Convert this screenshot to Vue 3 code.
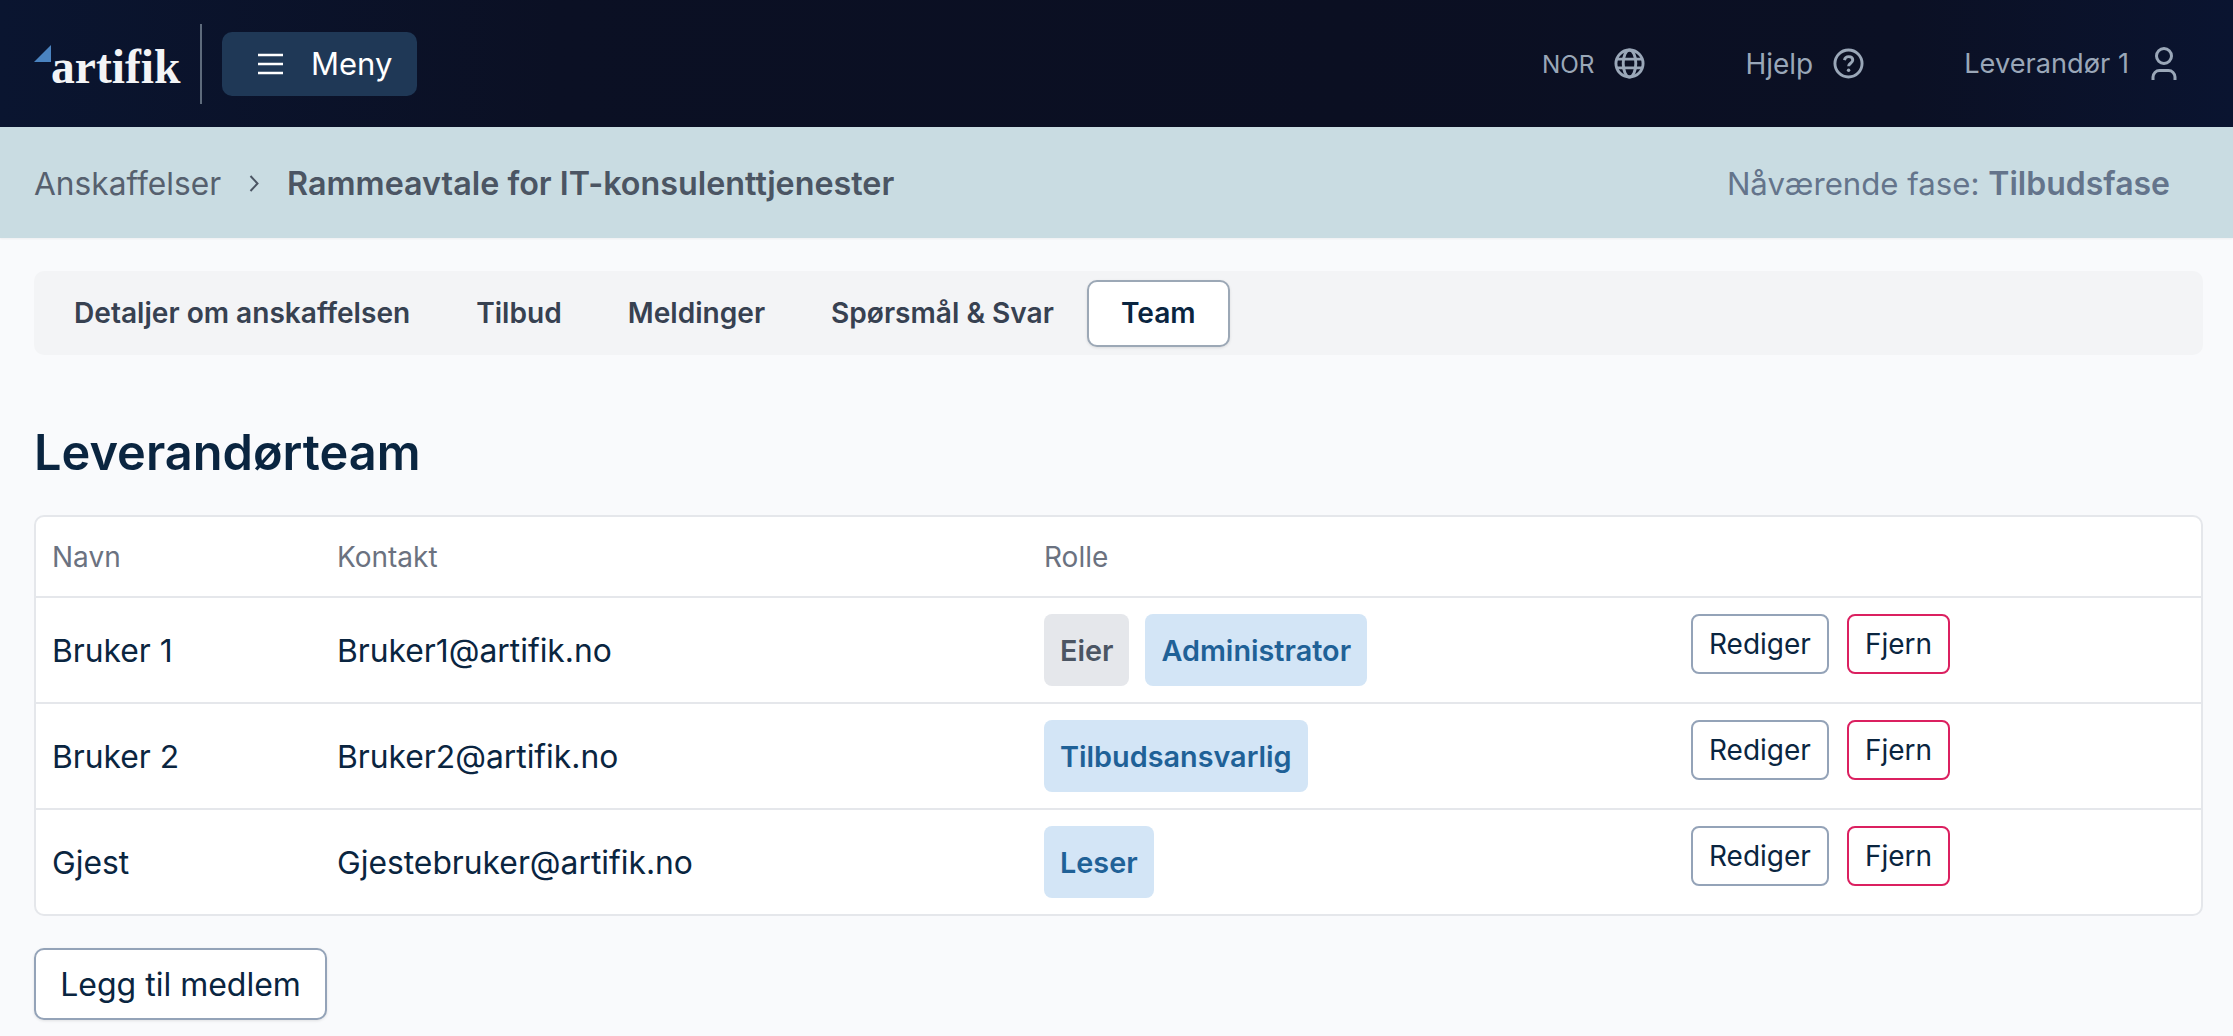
<script setup>
const members = [
  { name: "Bruker 1", email: "Bruker1@artifik.no", roles: [{ label: "Eier", kind: "grey" }, { label: "Administrator", kind: "blue" }] },
  { name: "Bruker 2", email: "Bruker2@artifik.no", roles: [{ label: "Tilbudsansvarlig", kind: "blue" }] },
  { name: "Gjest", email: "Gjestebruker@artifik.no", roles: [{ label: "Leser", kind: "blue" }] },
];

const tabs = ["Detaljer om anskaffelsen", "Tilbud", "Meldinger", "Spørsmål & Svar", "Team"];
</script>

<template>
  <div class="page">
    <header class="topbar">
      <div class="topbar-left">
        <div class="logo">
          <svg class="logo-mark" viewBox="0 0 17 17" aria-hidden="true">
            <polygon points="17,0 17,17 0,17" fill="#4a83c0" />
          </svg>
          <span class="logo-text">artifik</span>
        </div>
        <span class="divider"></span>
        <button class="menu-btn">
          <svg class="menu-icon" viewBox="0 0 25 22" aria-hidden="true">
            <path d="M0 2h25M0 11h25M0 20h25" stroke="#fff" stroke-width="2.4" fill="none" />
          </svg>
          <span>Meny</span>
        </button>
      </div>

      <div class="topbar-right">
        <div class="top-item lang">
          <span>NOR</span>
          <svg class="top-icon" viewBox="0 0 32 32" aria-hidden="true">
            <circle cx="16" cy="16" r="14" />
            <ellipse cx="16" cy="16" rx="6.5" ry="14" />
            <path d="M2.5 11.5h27M2.5 20.500h27" />
          </svg>
        </div>
        <div class="top-item help">
          <span>Hjelp</span>
          <svg class="top-icon" viewBox="0 0 32 32" aria-hidden="true">
            <circle cx="16" cy="16" r="14" />
            <path d="M11.800 12.500c.5-2.400 2.200-3.600 4.400-3.600 2.500 0 4.200 1.500 4.200 3.600 0 3.200-4.300 3.300-4.300 6.300" />
            <circle class="dot" cx="16.100" cy="23" r="1.800" />
          </svg>
        </div>
        <div class="top-item user">
          <span>Leverandør 1</span>
          <svg class="user-icon" viewBox="0 0 26 34" aria-hidden="true">
            <circle cx="13" cy="9" r="7.500" />
            <path d="M2 33v-3c0-3.500 3-6.500 6.500-6.500h9c3.500 0 6.500 3 6.500 6.500v3" />
          </svg>
        </div>
      </div>
    </header>

    <div class="subbar">
      <div class="crumbs">
        <span>Anskaffelser</span>
        <svg class="chevron" viewBox="0 0 10 17" aria-hidden="true">
          <path d="M1.500 1l7 7.500-7 7.500" fill="none" stroke="#4b5563" stroke-width="2" />
        </svg>
        <strong>Rammeavtale for IT-konsulenttjenester</strong>
      </div>
      <div class="phase">Nåværende fase: <strong>Tilbudsfase</strong></div>
    </div>

    <main class="content">
      <nav class="tabs">
        <a v-for="tab in tabs" :key="tab" class="tab" :class="{ active: tab === 'Team' }">{{ tab }}</a>
      </nav>

      <h1 class="title">Leverandørteam</h1>

      <div class="team-table">
        <div class="row head">
          <div>Navn</div>
          <div>Kontakt</div>
          <div>Rolle</div>
          <div></div>
        </div>
        <div v-for="m in members" :key="m.email" class="row">
          <div>{{ m.name }}</div>
          <div>{{ m.email }}</div>
          <div class="roles">
            <span v-for="r in m.roles" :key="r.label" class="badge" :class="r.kind">{{ r.label }}</span>
          </div>
          <div class="actions">
            <button class="btn">Rediger</button>
            <button class="btn danger">Fjern</button>
          </div>
        </div>
      </div>

      <button class="add-btn">Legg til medlem</button>
    </main>
  </div>
</template>

<style>
body {
  margin: 0;
  background: #f9fafc;
}
</style>

<style scoped>
.page {
  font-family: Inter, "Liberation Sans", sans-serif;
  color: #0a2540;
  height: 1036px;
  overflow: hidden;
}

/* === TOP BAR === */
.topbar {
  height: 127px;
  display: flex;
  align-items: center;
  justify-content: space-between;
  padding: 0 56px 0 34px;
  background: linear-gradient(90deg, #0a1530 0%, #0b1024 25%, #0b0f22 60%, #0b1024 85%, #0a1430 100%);
}

.topbar-left {
  display: flex;
  align-items: center;
}

.logo {
  display: flex;
  align-items: flex-start;
  height: 42px;
  width: 145px;
  margin-top: -4px;
}

.logo-mark {
  width: 17px;
  height: 17px;
  flex: none;
  margin-top: 4px;
}

.logo-text {
  font-family: "Liberation Serif", serif;
  font-weight: 700;
  font-size: 47.6px;
  line-height: 42px;
  color: #f3f4f6;
  margin-top: 5px;
}

.divider {
  width: 2px;
  height: 80px;
  background: #5e6b7c;
  margin: 0 20px 0 21px;
}

.menu-btn {
  display: flex;
  align-items: center;
  gap: 28px;
  height: 64px;
  width: 195px;
  padding: 0 0 0 36px;
  background: #1f3856;
  border: none;
  border-radius: 10px;
  color: #fff;
  font: inherit;
  font-size: 31px;
}

.menu-icon {
  width: 25px;
  height: 22px;
}

.topbar-right {
  display: flex;
  align-items: center;
  color: #9aa7b8;
  font-size: 27.2px;
}

.top-item {
  display: flex;
  align-items: center;
  gap: 20px;
}

.lang {
  font-size: 24.3px;
}

.help {
  margin-left: 100px;
  font-size: 28px;
}

.user {
  margin-left: 100px;
  gap: 22px;
}

.top-icon {
  width: 31px;
  height: 31px;
  fill: none;
  stroke: #9aa7b8;
  stroke-width: 3;
}

.top-icon .dot {
  fill: #9aa7b8;
  stroke: none;
}

.user-icon {
  width: 26px;
  height: 34px;
  fill: none;
  stroke: #9aa7b8;
  stroke-width: 3;
}

/* === SUB BAR === */
.subbar {
  height: 109px;
  padding: 2px 63px 0 34px;
  display: flex;
  align-items: center;
  justify-content: space-between;
  background: #c9dce2;
  font-size: 31.7px;
  box-shadow: 0 1px 2px rgba(0, 0, 0, 0.05);
}

.crumbs {
  display: flex;
  align-items: center;
  color: #56606e;
}

.crumbs strong {
  font-size: 32.3px;
  font-weight: 600;
  color: #4b5563;
}

.chevron {
  width: 10px;
  height: 17px;
  margin: 0 28px;
}

.phase {
  font-size: 31.2px;
  color: #64748b;
}

.phase strong {
  font-size: 32px;
  font-weight: 600;
}

/* === CONTENT === */
.content {
  padding: 33px 30px 0 34px;
}

.tabs {
  display: flex;
  align-items: center;
  height: 84px;
  padding-left: 7px;
  background: #f3f4f6;
  border-radius: 10px;
}

.tab {
  padding: 0 33px;
  height: 67px;
  line-height: 67px;
  font-size: 28.1px;
  font-weight: 600;
  color: #374151;
  box-sizing: border-box;
}

.tab.active {
  background: #fff;
  color: #0a2540;
  border: 2px solid #9ca8b6;
  border-radius: 10px;
  line-height: 63px;
  padding: 0 32px;
  box-shadow: 0 1px 3px rgba(0, 0, 0, 0.1);
}

.title {
  margin: 66px 0 0;
  font-size: 48.7px;
  line-height: 64px;
  font-weight: 600;
  color: #0a2540;
}

/* === TABLE === */
.team-table {
  margin-top: 30px;
  background: #fff;
  border: 2px solid #e5e7eb;
  border-radius: 10px;
}

.row {
  display: grid;
  grid-template-columns: 285px 707px 647px 1fr;
  align-items: center;
  height: 104px;
  padding-left: 16px;
  font-size: 31.8px;
  border-bottom: 2px solid #e5e7eb;
}

.row:last-child {
  border-bottom: none;
}

.row.head {
  height: 79px;
  font-size: 28px;
  color: #6b7280;
}

.roles {
  display: flex;
  gap: 16px;
  height: 72px;
}

.badge {
  display: flex;
  align-items: center;
  padding: 0 16px;
  border-radius: 8px;
  font-size: 28.8px;
  font-weight: 600;
}

.badge.grey {
  background: #e5e7eb;
  color: #4b5563;
}

.badge.blue {
  background: #d3e5f6;
  color: #1f6197;
}

.actions {
  display: flex;
  gap: 18px;
  align-self: start;
  margin-top: 16px;
}

.btn {
  height: 60px;
  padding: 0 16px;
  background: #fff;
  border: 2px solid #94a3b8;
  border-radius: 8px;
  font: inherit;
  font-size: 28px;
  color: #0a2540;
}

.btn.danger {
  border-color: #db2060;
}

.add-btn {
  display: block;
  margin-top: 32px;
  width: 293px;
  height: 72px;
  background: #fff;
  border: 2px solid #94a3b8;
  border-radius: 10px;
  font: inherit;
  font-size: 32px;
  color: #0a2540;
  box-shadow: 0 1px 3px rgba(0, 0, 0, 0.1);
}
</style>
